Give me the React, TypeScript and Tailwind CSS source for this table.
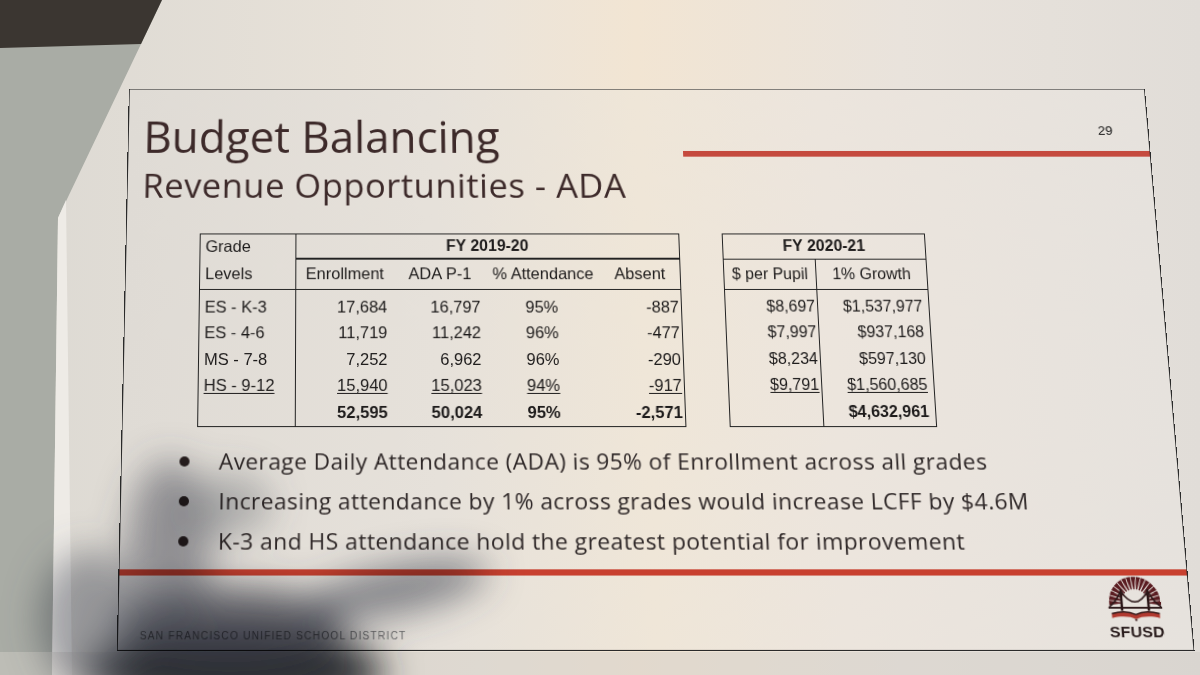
import React from "react";

function Logo() {
  const rays = Array.from({ length: 17 }, (_, i) => {
    const a = Math.PI + (i / 16) * Math.PI;
    const cx = 30;
    const cy = 27;
    const r1 = 14;
    const r2 = 27;
    const w1 = 0.045;
    const w2 = 0.085;
    const p = (r: number, ang: number) => `${(cx + r * Math.cos(ang)).toFixed(2)},${(cy + r * Math.sin(ang)).toFixed(2)}`;
    return [p(r1, a - w1), p(r2, a - w2), p(r2, a + w2), p(r1, a + w1)].join(" ");
  });
  return (
    <div className="flex flex-col items-center w-[56px]">
      <svg width="56" height="43" viewBox="0 0 60 46">
        {rays.map((pts, i) => (
          <polygon key={i} points={pts} fill="#5a1c21" />
        ))}
        <path d="M16 15 Q30 37 44 15" fill="none" stroke="#2b1718" strokeWidth="1.6" />
        <path d="M16 15 Q10 26 3 31" fill="none" stroke="#2b1718" strokeWidth="1.6" />
        <path d="M44 15 Q50 26 57 31" fill="none" stroke="#2b1718" strokeWidth="1.6" />
        <line x1="16" y1="13" x2="16" y2="35" stroke="#2b1718" strokeWidth="2.6" />
        <line x1="44" y1="13" x2="44" y2="35" stroke="#2b1718" strokeWidth="2.6" />
        <line x1="2" y1="32" x2="58" y2="32" stroke="#2b1718" strokeWidth="2" />
        <path
          d="M5 38 C14 35.5 24 36 30 39 C36 36 46 35.5 55 38 L55 42.5 C46 40 36 40.5 30 43.5 C24 40.5 14 40 5 42.5 Z"
          fill="#b23a30"
        />
        <path d="M5 38 C14 35.5 24 36 30 39 C36 36 46 35.5 55 38" fill="none" stroke="#3a1a1a" strokeWidth="1.5" />
        <path d="M28.3 43.5 L31.7 43.5 L30 46 Z" fill="#3a1a1a" />
      </svg>
      <div className="mt-[2px] text-[15.5px] leading-[15px] font-bold tracking-[0.2px] text-[#2a1d1d] font-['Liberation_Sans',Arial,sans-serif]">
        SFUSD
      </div>
    </div>
  );
}

type Row = { grade: string; enr: string; ada: string; pct: string; abs: string; ul?: boolean };

const rows: Row[] = [
  { grade: "ES - K-3", enr: "17,684", ada: "16,797", pct: "95%", abs: "-887" },
  { grade: "ES - 4-6", enr: "11,719", ada: "11,242", pct: "96%", abs: "-477" },
  { grade: "MS - 7-8", enr: "7,252", ada: "6,962", pct: "96%", abs: "-290" },
  { grade: "HS - 9-12", enr: "15,940", ada: "15,023", pct: "94%", abs: "-917", ul: true },
];

const rows2 = [
  { pp: "$8,697", g: "$1,537,977" },
  { pp: "$7,997", g: "$937,168" },
  { pp: "$8,234", g: "$597,130" },
  { pp: "$9,791", g: "$1,560,685", ul: true },
];

function U({ on, children }: { on?: boolean; children: React.ReactNode }) {
  return <span className={on ? "underline decoration-1 underline-offset-[2px]" : ""}>{children}</span>;
}

function Table1() {
  return (
    <div className="w-[486px] h-[196px] flex border-[1.5px] border-[#222] text-[16.5px] text-[#1d1b1b] font-['Liberation_Sans',Arial,sans-serif]">
      <div className="w-[96.5px] border-r-[1.5px] border-[#222] flex flex-col">
        <div className="h-[56.5px] border-b-[1.5px] border-[#222] flex flex-col pl-[5px]">
          <div className="h-[24px] leading-[24px]">Grade</div>
          <div className="h-[2px]" />
          <div className="h-[29px] leading-[29px]">Levels</div>
        </div>
        <div className="pt-[4px]">
          {rows.map((r) => (
            <div key={r.grade} className="h-[26.6px] leading-[26.6px] pl-[5px]">
              <U on={r.ul}>{r.grade}</U>
            </div>
          ))}
        </div>
      </div>
      <div className="flex-1 flex flex-col">
        <div className="h-[26px] border-b-[2px] border-[#222] text-center font-bold text-[16px] leading-[24px]">
          FY 2019-20
        </div>
        <div className="h-[30.5px] border-b-[1.5px] border-[#222] grid grid-cols-[99px_93px_115px_1fr] leading-[29px]">
          <div className="text-center">Enrollment</div>
          <div className="text-center">ADA P-1</div>
          <div className="text-center">% Attendance</div>
          <div className="text-center">Absent</div>
        </div>
        <div className="pt-[4px]">
          {rows.map((r) => (
            <div key={r.grade} className="h-[26.6px] leading-[26.6px] grid grid-cols-[99px_93px_115px_1fr]">
              <div className="text-right pr-[7px]"><U on={r.ul}>{r.enr}</U></div>
              <div className="text-right pr-[6px]"><U on={r.ul}>{r.ada}</U></div>
              <div className="text-center pr-[4px]"><U on={r.ul}>{r.pct}</U></div>
              <div className="text-right pr-[2px]"><U on={r.ul}>{r.abs}</U></div>
            </div>
          ))}
          <div className="h-[26.6px] leading-[26.6px] grid grid-cols-[99px_93px_115px_1fr] font-bold">
            <div className="text-right pr-[7px]">52,595</div>
            <div className="text-right pr-[6px]">50,024</div>
            <div className="text-center pr-[4px]">95%</div>
            <div className="text-right pr-[2px]">-2,571</div>
          </div>
        </div>
      </div>
    </div>
  );
}

function Table2() {
  return (
    <div className="w-[206px] h-[196px] flex flex-col border-[1.5px] border-[#222] text-[16px] text-[#1d1b1b] font-['Liberation_Sans',Arial,sans-serif]">
      <div className="h-[26px] border-b-[1.5px] border-[#222] text-center font-bold leading-[24px]">FY 2020-21</div>
      <div className="h-[30.5px] border-b-[1.5px] border-[#222] flex leading-[29px]">
        <div className="w-[93px] border-r-[1.5px] border-[#222] text-center">$ per Pupil</div>
        <div className="flex-1 text-center">1% Growth</div>
      </div>
      <div className="flex-1 flex">
        <div className="w-[93px] border-r-[1.5px] border-[#222] flex flex-col pt-[4px]">
          {rows2.map((r) => (
            <div key={r.pp} className="h-[26.6px] leading-[26.6px] text-right pr-[2px]">
              <U on={r.ul}>{r.pp}</U>
            </div>
          ))}
        </div>
        <div className="flex-1 flex flex-col pt-[4px]">
          {rows2.map((r) => (
            <div key={r.g} className="h-[26.6px] leading-[26.6px] text-right pr-[6px]">
              <U on={r.ul}>{r.g}</U>
            </div>
          ))}
          <div className="h-[26.6px] leading-[26.6px] text-right pr-[6px] font-bold">$4,632,961</div>
        </div>
      </div>
    </div>
  );
}

const bullets = [
  "Average Daily Attendance (ADA) is 95% of Enrollment across all grades",
  "Increasing attendance by 1% across grades would increase LCFF by $4.6M",
  "K-3 and HS attendance hold the greatest potential for improvement",
];

export default function App() {
  return (
    <div className="relative w-[1200px] h-[675px] overflow-hidden bg-[#e6e1da] pt-[79px] pl-[123px]">
      <svg className="absolute inset-0 pointer-events-none" width="1200" height="675">
        <defs>
          <linearGradient id="paper" x1="0" x2="1" y1="0" y2="0">
            <stop offset="0" stopColor="#dcd9d3" />
            <stop offset="0.4" stopColor="#ebe4da" />
            <stop offset="0.53" stopColor="#f2e5d3" />
            <stop offset="0.75" stopColor="#e9e3dc" />
            <stop offset="1" stopColor="#e1ddd8" />
          </linearGradient>
        </defs>
        <rect width="1200" height="675" fill="url(#paper)" />
        <polygon points="0,0 162,0 58,218 52,675 0,675" fill="#a9aca5" />
        <polygon points="58,218 66,200 72,675 52,675" fill="#eeebe6" />
        <polygon points="0,0 162,0 141,44 0,48" fill="#3b3631" />
        <rect y="652" width="1200" height="23" fill="#d2cdc7" opacity="0.5" />
      </svg>

      <div className="relative w-[1046px] h-[565px] flex flex-col border border-[#2a2a2a] bg-[linear-gradient(90deg,#dfdbd5_0%,#e6e1da_30%,#efe6d8_50%,#ece5dd_68%,#e6e2dd_100%)] [transform:perspective(1000px)_rotateX(6deg)_skewX(1.9deg)]">
        <div className="h-[118px] flex">
          <div className="w-[567px] pl-[15px] pt-[27px] text-[#3d2a2a] font-['Open_Sans',sans-serif]">
            <div className="text-[45px] leading-[45px]">Budget Balancing</div>
            <div className="mt-[11px] text-[35px] leading-[35px] tracking-[0.6px]">Revenue Opportunities - ADA</div>
          </div>
          <div className="flex-1 flex flex-col pt-[36px]">
            <div className="text-right pr-[36px] text-[13.5px] leading-[15px] text-[#111] font-['Liberation_Sans',Arial,sans-serif]">
              29
            </div>
            <div className="mt-[14px] h-[6px] bg-[#c54a3e]" />
          </div>
        </div>

        <div className="mt-[33px] pl-[74px] flex items-start gap-[43px]">
          <Table1 />
          <Table2 />
        </div>

        <ul className="mt-[14px] flex flex-col text-[22.5px] tracking-[0.4px] text-[#2f2828] font-['Open_Sans',sans-serif]">
          {bullets.map((b) => (
            <li key={b} className="h-[39px] flex items-center pl-[57px]">
              <span className="w-[10px] h-[10px] rounded-full bg-[#2a2020] shrink-0" />
              <span className="ml-[29px] whitespace-nowrap">{b}</span>
            </li>
          ))}
        </ul>

        <div className="mt-[8px] h-[6px] bg-[#c8402f]" />

        <div className="flex-1 flex justify-between items-start">
          <div className="self-end mb-[7px] pl-[21px] text-[10px] leading-[12px] tracking-[1.1px] text-[#6f6f6f] font-['Liberation_Sans',Arial,sans-serif]">
            SAN FRANCISCO UNIFIED SCHOOL DISTRICT
          </div>
          <div className="pt-[1px] pr-[25px]">
            <Logo />
          </div>
        </div>
      </div>

      <svg className="absolute inset-0 pointer-events-none mix-blend-multiply" width="1200" height="675">
        <defs>
          <filter id="blur" x="-50%" y="-50%" width="200%" height="200%">
            <feGaussianBlur stdDeviation="18" />
          </filter>
        </defs>
        <g filter="url(#blur)">
          <ellipse cx="235" cy="672" rx="150" ry="42" fill="#262a34" opacity="0.95" />
          <ellipse cx="230" cy="625" rx="115" ry="38" fill="#3c4250" opacity="0.75" />
          <ellipse cx="395" cy="590" rx="95" ry="24" transform="rotate(-12 395 590)" fill="#4a5060" opacity="0.6" />
          <ellipse cx="170" cy="545" rx="42" ry="85" fill="#4a5060" opacity="0.5" />
          <ellipse cx="230" cy="505" rx="42" ry="32" fill="#5a6070" opacity="0.35" />
          <ellipse cx="90" cy="620" rx="50" ry="70" fill="#5a6070" opacity="0.5" />
        </g>
      </svg>
    </div>
  );
}
